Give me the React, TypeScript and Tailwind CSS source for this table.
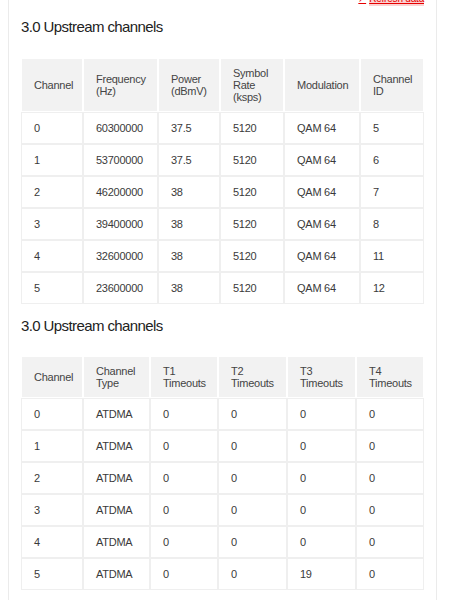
const upstream = [
  { ch: "0", freq: "60300000", power: "37.5", rate: "5120", mod: "QAM 64", id: "5" },
  { ch: "1", freq: "53700000", power: "37.5", rate: "5120", mod: "QAM 64", id: "6" },
  { ch: "2", freq: "46200000", power: "38", rate: "5120", mod: "QAM 64", id: "7" },
  { ch: "3", freq: "39400000", power: "38", rate: "5120", mod: "QAM 64", id: "8" },
  { ch: "4", freq: "32600000", power: "38", rate: "5120", mod: "QAM 64", id: "11" },
  { ch: "5", freq: "23600000", power: "38", rate: "5120", mod: "QAM 64", id: "12" },
];

const timeouts = [
  { ch: "0", type: "ATDMA", t1: "0", t2: "0", t3: "0", t4: "0" },
  { ch: "1", type: "ATDMA", t1: "0", t2: "0", t3: "0", t4: "0" },
  { ch: "2", type: "ATDMA", t1: "0", t2: "0", t3: "0", t4: "0" },
  { ch: "3", type: "ATDMA", t1: "0", t2: "0", t3: "0", t4: "0" },
  { ch: "4", type: "ATDMA", t1: "0", t2: "0", t3: "0", t4: "0" },
  { ch: "5", type: "ATDMA", t1: "0", t2: "0", t3: "19", t4: "0" },
];

const th = "bg-[#f2f2f2] border border-white px-3 text-left font-normal align-middle leading-[12px] text-[#444]";
const td = "border border-[#efefef] px-3 h-[32px] align-middle text-[#3a3a3a]";

const App = () => {
  return (
    <div className="min-h-screen bg-white overflow-hidden font-['Liberation_Sans',sans-serif]">
      <div className="ml-[8px] w-[429px] min-h-screen border-x border-[#ebebeb] px-3 pb-6">
        {/* Refresh link, scrolled mostly out of view */}
        <div className="-mt-[9px] h-[16px] flex justify-end">
          <a href="#" className="flex items-center gap-[3px] text-[10px] leading-[14px] tracking-[-0.2px] text-[#e60000] underline">
            <span className="text-[9px]">&#x2197;</span>
            <span className="bg-[#fbd2d2]">Refresh data</span>
          </a>
        </div>

        {/* Upstream channels */}
        <h2 className="mt-[8px] text-[15px] leading-[24px] tracking-[-0.6px] text-[#222]">3.0 Upstream channels</h2>
        <table className="mt-[19px] w-[403px] table-fixed border-separate border-spacing-0 text-[11px] tracking-[-0.25px]">
          <thead>
            <tr className="h-[54px]">
              <th className={`${th} w-[62px]`}>Channel</th>
              <th className={`${th} w-[75px]`}>Frequency (Hz)</th>
              <th className={`${th} w-[62px]`}>Power (dBmV)</th>
              <th className={`${th} w-[64px]`}>Symbol Rate (ksps)</th>
              <th className={`${th} w-[76px]`}>Modulation</th>
              <th className={`${th} w-[64px]`}>Channel ID</th>
            </tr>
          </thead>
          <tbody>
            {upstream.map((r) => (
              <tr key={r.ch}>
                <td className={td}>{r.ch}</td>
                <td className={td}>{r.freq}</td>
                <td className={td}>{r.power}</td>
                <td className={td}>{r.rate}</td>
                <td className={td}>{r.mod}</td>
                <td className={td}>{r.id}</td>
              </tr>
            ))}
          </tbody>
        </table>

        {/* Timeouts */}
        <h2 className="mt-[10px] text-[15px] leading-[24px] tracking-[-0.6px] text-[#222]">3.0 Upstream channels</h2>
        <table className="mt-[18px] w-[403px] table-fixed border-separate border-spacing-0 text-[11px] tracking-[-0.25px]">
          <thead>
            <tr className="h-[42px]">
              <th className={`${th} w-[62px]`}>Channel</th>
              <th className={`${th} w-[67px]`}>Channel Type</th>
              <th className={`${th} w-[68px]`}>T1 Timeouts</th>
              <th className={`${th} w-[69px]`}>T2 Timeouts</th>
              <th className={`${th} w-[69px]`}>T3 Timeouts</th>
              <th className={`${th} w-[68px]`}>T4 Timeouts</th>
            </tr>
          </thead>
          <tbody>
            {timeouts.map((r) => (
              <tr key={r.ch}>
                <td className={td}>{r.ch}</td>
                <td className={td}>{r.type}</td>
                <td className={td}>{r.t1}</td>
                <td className={td}>{r.t2}</td>
                <td className={td}>{r.t3}</td>
                <td className={td}>{r.t4}</td>
              </tr>
            ))}
          </tbody>
        </table>
      </div>
    </div>
  );
};

export default App;
